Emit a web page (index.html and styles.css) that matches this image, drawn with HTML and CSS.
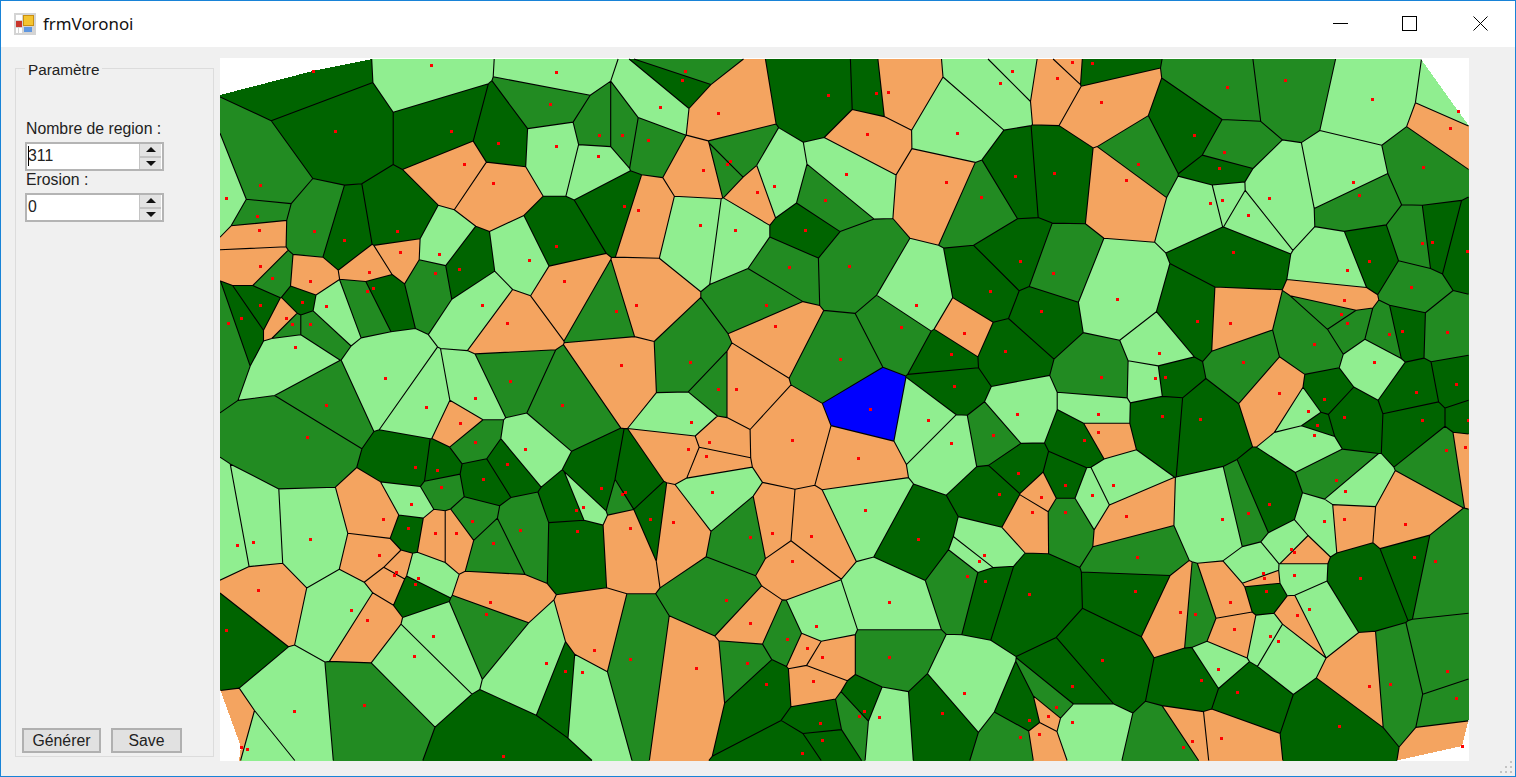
FILE: index.html
```html
<!DOCTYPE html>
<html lang="fr">
<head>
  <meta charset="UTF-8">
  <title>frmVoronoi</title>
  <link rel="stylesheet" href="styles.css">
</head>
<body>
  <div class="window">
    <div class="titlebar">
      <svg class="app-icon" width="22" height="22" viewBox="0 0 22 22">
        <rect x="0" y="0" width="22" height="22" fill="#d4d4d4"/>
        <rect x="2" y="2" width="6" height="5" fill="#fff"/>
        <rect x="2" y="15" width="2" height="5" fill="#fff"/>
        <rect x="5" y="15" width="3" height="5" fill="#fff"/>
        <rect x="2" y="8" width="6" height="6" fill="#c8352b"/>
        <rect x="9.5" y="2.5" width="10" height="10" fill="#f4c430" stroke="#c98f10"/>
        <rect x="10" y="14" width="8" height="5" fill="#5f97e0"/>
      </svg>
      <span class="app-title">frmVoronoi</span>
      <div class="window-buttons">
        <svg class="win-min" width="15" height="15" viewBox="0 0 15 15"><path d="M0 7.5h15" stroke="#000"/></svg>
        <svg class="win-max" width="15" height="15" viewBox="0 0 15 15"><rect x="0.5" y="0.5" width="14" height="14" fill="none" stroke="#000"/></svg>
        <svg width="15" height="15" viewBox="0 0 15 15"><path d="M0.5 0.5l14 14M14.5 0.5l-14 14" stroke="#000"/></svg>
      </div>
    </div>
    <div class="content">
      <fieldset class="params">
        <legend>Paramètre</legend>
        <div class="field-label first">Nombre de region :</div>
        <div class="spinbox">
          <span class="spin-value"><span class="caret"></span>311</span>
          <span class="spin-btns">
            <span class="spin-btn"><span class="arrow-up"></span></span>
            <span class="spin-btn"><span class="arrow-down"></span></span>
          </span>
        </div>
        <div class="field-label">Erosion :</div>
        <div class="spinbox">
          <span class="spin-value">0</span>
          <span class="spin-btns">
            <span class="spin-btn"><span class="arrow-up"></span></span>
            <span class="spin-btn"><span class="arrow-down"></span></span>
          </span>
        </div>
        <div class="actions">
          <button class="btn btn-gen">Générer</button>
          <button class="btn btn-save">Save</button>
        </div>
      </fieldset>
      <svg id="voronoi" class="picture" width="1249" height="703" viewBox="220 58 1249 703"></svg>
    </div>
    <div class="grip">
      <i></i><i></i><i></i><i></i><i></i><i></i>
    </div>
  </div>
  <script src="script.js"></script>
</body>
</html>
```

FILE: styles.css
```css
* {
  box-sizing: border-box;
}

body {
  margin: 0;
  font-family: "Liberation Sans", Arial, sans-serif;
  font-size: 15.8px;
  color: #222;
  overflow: hidden;
}

.window {
  position: relative;
  width: 1516px;
  height: 777px;
  border: 1px solid #1883d7;
  background-color: #f0f0f0;
  display: flex;
  flex-direction: column;
}

.titlebar {
  height: 46px;
  background-color: white;
  display: flex;
  align-items: center;
  padding-left: 13px;
}

.app-icon {
  margin-right: 7px;
}

.app-title {
  margin-bottom: 2px;
  font-family: "Noto Sans", sans-serif;
  font-size: 16.9px;
  color: #111;
}

.window-buttons {
  margin: 0 27px 1px auto;
  display: flex;
}

.window-buttons svg {
  display: block;
}

.win-min {
  margin-right: 54px;
}

.win-max {
  margin-right: 56px;
}

.content {
  display: flex;
  align-items: flex-start;
  padding: 11px 0 0 14px;
}

.params {
  width: 199px;
  height: 697px;
  margin: 2px 6px 0 0;
  padding: 0 0 3px 0;
  border: 1px solid #dcdcdc;
  display: flex;
  flex-direction: column;
}

.params legend {
  margin-left: 9px;
  padding: 3px 3px 0;
  font-size: 15.3px;
  line-height: 14px;
}

.field-label {
  margin: 1px 0 5px 10px;
  line-height: 16px;
}

.field-label.first {
  margin-top: 44px;
}

.spinbox {
  width: 139px;
  height: 29px;
  margin-left: 9px;
  border: 2px solid #b4b4b4;
  background-color: white;
  display: flex;
  align-items: center;
  justify-content: space-between;
}

.spin-value {
  position: relative;
  padding-left: 1px;
  margin-bottom: 1px;
  line-height: 18px;
}

.caret {
  position: absolute;
  left: 1px;
  top: -1px;
  width: 1px;
  height: 20px;
  background-color: black;
}

.spin-btns {
  width: 22px;
  height: 25px;
  margin-right: 1px;
  padding: 0 0 0 1px;
  background-color: #c4c4c4;
  display: flex;
  flex-direction: column;
  gap: 2px;
}

.spin-btn {
  flex: 1;
  background-color: #e3e3e3;
  display: flex;
  align-items: center;
  justify-content: center;
}

.arrow-up {
  border: 5px solid transparent;
  border-top: 0;
  border-bottom: 5px solid #111;
}

.arrow-down {
  border: 5px solid transparent;
  border-bottom: 0;
  border-top: 5px solid #111;
}

.actions {
  margin: auto 0 0 6px;
  display: flex;
  gap: 10px;
}

.btn {
  height: 25px;
  padding: 1px 0 0;
  border: 2px solid #b0b0b0;
  background-color: #e1e1e1;
  font: inherit;
  color: #222;
}

.btn-gen {
  width: 79px;
}

.btn-save {
  width: 71px;
}

.picture {
  display: block;
  background-color: white;
}

.picture polygon {
  shape-rendering: crispEdges;
}

.picture .edges {
  fill: none;
  stroke: black;
  stroke-width: 1.1;
}

.picture .site {
  fill: red;
}

.grip {
  position: absolute;
  right: 3px;
  bottom: 3px;
  width: 12px;
  display: grid;
  grid-template-columns: repeat(3, 2px);
  justify-content: space-between;
  row-gap: 3px;
}

.grip i {
  height: 2px;
  background-color: #c4c4c4;
}

.grip i:nth-child(1) {
  grid-column: 3;
}

.grip i:nth-child(2) {
  grid-column: 2;
}

.grip i:nth-child(4) {
  grid-column: 1;
}
```

FILE: script.js
```js
const colors = { D: '#006400', G: '#228b22', L: '#90ee90', O: '#f4a460', B: '#0000ff' };

// sites read off 3x crops of the picture: "x,y,color" relative to the crop origin
const crops = [
  { x: 220, y: 58, sites: `279,39,D 634,21,L 1008,43,L 346,218,D 693,218,D 990,138,G 1138,232,G 1206,232,G
    121,380,G 18,421,L 833,255,D 1008,264,L 1134,295,L 733,318,O 819,376,O 112,475,G 116,516,O 283,520,G
    373,547,D 531,520,D 1211,443,D 1255,457,O 1008,565,D 540,583,O 657,588,L 927,605,L 121,624,O 716,633,D
    644,646,G 157,660,G 269,669,O 446,642,O 1031,669,O 459,691,D 441,700,G 247,732,D 319,745,L 121,741,D
    787,741,L 1188,759,G 1247,741,O 23,795,G 63,781,D 198,781,O 216,799,G 269,799,G 860,795,O 225,867,L
    495,961,L 1202,921,O 869,970,G 765,1020,L 319,1042,G 617,1047,L 1026,1042,G` },
  { x: 636, y: 58, sites: `147,39,G 138,66,D 71,147,L 246,165,O 575,111,D 719,106,D 755,102,O 1128,39,L
    1092,75,L 692,228,O 962,224,L 35,245,G 201,336,O 282,309,G 273,318,G 413,385,L 363,403,O 629,349,L
    566,426,G 930,371,O 1138,354,D 1034,417,G 192,502,L 296,516,L 507,516,D 458,628,G 638,623,G 1151,610,D
    390,741,G 840,741,L 1061,700,D 1214,759,D 417,804,O 796,808,G 984,826,O 161,912,G 611,903,G 1106,880,D
    944,889,D 246,993,G 300,993,O 953,984,D 701,1054,B` },
  { x: 1050, y: 58, sites: `67,12,O 125,16,D 22,60,O 152,133,O 530,88,G 706,66,G 967,124,L 1223,160,L
    1201,210,O 431,232,D 521,282,G 264,318,G 508,331,D 13,345,D 1120,327,G 228,367,O 908,372,L 927,412,G
    481,435,L 517,426,L 656,421,L 593,471,L 548,583,D 1116,556,G 1147,552,D 1251,579,D 8,646,G 958,610,D
    890,637,L 1084,687,G 201,723,L 881,727,O 872,768,G 890,795,G 440,790,D 539,795,O 1192,822,G 1057,818,D
    1016,827,G 791,858,G 327,885,L 580,912,G 971,912,L 152,957,G 345,957,D 314,961,L 1219,979,D 1097,1002,D
    688,1006,O 823,1024,D` },
  { x: 220, y: 410, sites: `261,81,G 720,40,O 765,95,G 914,117,L 585,171,D 652,180,D 860,162,D 662,230,G
    788,207,D 1143,234,D 1207,252,G 1215,247,D 572,283,L 1067,301,D 1089,292,L 756,333,G 490,328,O 563,355,D
    644,369,O 707,369,O 900,360,G 1071,364,D 1229,355,O 270,387,L 819,400,G 99,396,L 50,405,L 477,436,O
    527,486,O 522,495,O 594,504,L 585,522,D 113,540,O 810,576,O 797,612,G 392,599,L 441,630,O 18,661,D
    639,679,L 581,738,L 1121,720,O 1229,747,G 977,760,L 1035,783,D 1085,787,L 432,886,G 221,904,L 850,1039,D
    63,1012,O 81,1017,L` },
  { x: 636, y: 410, sites: `165,35,L 876,31,L 1142,13,L 467,90,O 219,95,O 156,117,O 210,139,O 1070,76,G
    944,99,L 665,144,O 1146,188,D 228,247,L 1088,252,D 1214,261,O 687,301,L 1187,306,O 43,328,D 111,337,O
    341,382,G 845,387,D 408,369,O 525,378,O 467,454,O 1043,436,L 1029,454,L 994,499,G 1048,513,D 1178,553,D
    269,571,G 759,576,L 341,638,O 539,648,L 453,688,G 512,715,O 557,742,O 759,742,G 179,774,O 332,760,G
    530,814,O 390,823,D 985,850,L 683,904,D 669,917,G 728,922,L 917,909,D 1237,917,O 1178,931,D 552,940,D
    1209,971,O 1151,980,G 557,990,D 498,1030,D` },
  { x: 1050, y: 410, sites: `143,13,L 337,18,D 449,27,D 773,4,L 881,22,D 801,45,D 1115,31,D 1255,31,D 791,76,L
    143,67,O 103,90,D 1246,112,O 1187,121,G 858,211,G 885,243,L 44,225,D 188,225,L 125,256,L 656,283,D
    44,305,G 228,319,O 593,310,G 517,328,L 881,328,O 823,333,L 1066,342,O 260,441,G 733,427,O 724,418,L
    1093,441,D 1156,454,G 733,495,L 638,490,L 643,504,O 931,504,D 256,544,D 647,544,D 539,576,O 778,598,L
    742,616,O 390,607,O 436,611,G 553,657,O 661,679,L 683,692,L 156,751,D 503,778,L 1192,783,G 1021,823,G
    454,810,D 67,828,D 958,828,O 562,846,D 1219,864,G 17,890,G 868,949,D 67,936,L 427,994,O 512,985,O
    400,1012,G 1237,1008,O` }
];

// the drawn area, with the corners cut off by the outer sites
const outline = [
  [372, 59], [1421, 59], [1458, 111], [1468.5, 125], [1468.5, 720], [1462, 746], [1397, 760.5],
  [239, 760.5], [241, 747], [220, 689], [220, 95], [313, 71]
];

const sites = [];
crops.forEach(crop => {
  crop.sites.trim().split(/\s+/).forEach(item => {
    const parts = item.split(',');
    sites.push({
      x: crop.x + Number(parts[0]) / 3,
      y: crop.y + Number(parts[1]) / 3,
      color: parts[2]
    });
  });
});

// keeps the part of poly that is nearer to a than to b
const clipToSite = (poly, a, b) => {
  const mx = (a.x + b.x) / 2;
  const my = (a.y + b.y) / 2;
  const nx = b.x - a.x;
  const ny = b.y - a.y;
  const side = p => (p[0] - mx) * nx + (p[1] - my) * ny;
  const result = [];

  poly.forEach((p, i) => {
    const q = poly[(i + 1) % poly.length];
    const sp = side(p);
    const sq = side(q);
    if (sp <= 0) result.push(p);
    if ((sp < 0 && sq > 0) || (sp > 0 && sq < 0)) {
      const t = sp / (sp - sq);
      result.push([p[0] + (q[0] - p[0]) * t, p[1] + (q[1] - p[1]) * t]);
    }
  });
  return result;
};

// the outer border of the picture has no black line
const onOutline = (p, q) => {
  const x = (p[0] + q[0]) / 2;
  const y = (p[1] + q[1]) / 2;
  return outline.some((a, i) => {
    const b = outline[(i + 1) % outline.length];
    const dx = b[0] - a[0];
    const dy = b[1] - a[1];
    return Math.abs((x - a[0]) * dy - (y - a[1]) * dx) / Math.hypot(dx, dy) < 0.05;
  });
};

const svg = document.getElementById('voronoi');
const svgNS = 'http://www.w3.org/2000/svg';
let edges = '';

sites.forEach(site => {
  let poly = outline;
  sites.forEach(other => {
    if (other !== site && poly.length) poly = clipToSite(poly, site, other);
  });
  if (!poly.length) return;

  const cell = document.createElementNS(svgNS, 'polygon');
  cell.setAttribute('points', poly.map(p => p[0].toFixed(1) + ',' + p[1].toFixed(1)).join(' '));
  cell.setAttribute('fill', colors[site.color]);
  svg.appendChild(cell);

  poly.forEach((p, i) => {
    const q = poly[(i + 1) % poly.length];
    if (!onOutline(p, q)) {
      edges += `M${p[0].toFixed(1)} ${p[1].toFixed(1)}L${q[0].toFixed(1)} ${q[1].toFixed(1)}`;
    }
  });
});

const lines = document.createElementNS(svgNS, 'path');
lines.setAttribute('class', 'edges');
lines.setAttribute('d', edges);
svg.appendChild(lines);

sites.forEach(site => {
  const dot = document.createElementNS(svgNS, 'rect');
  dot.setAttribute('class', 'site');
  dot.setAttribute('x', Math.round(site.x - 1));
  dot.setAttribute('y', Math.round(site.y - 1));
  dot.setAttribute('width', 3);
  dot.setAttribute('height', 3);
  svg.appendChild(dot);
});
```
